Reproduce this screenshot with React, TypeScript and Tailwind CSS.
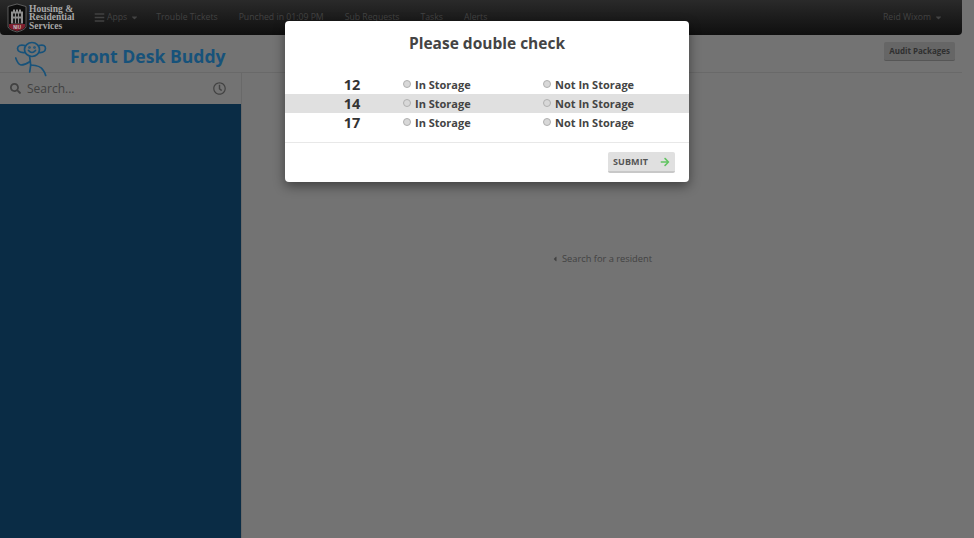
import { FaArrowRight, FaBars, FaCaretDown, FaCaretLeft, FaRegClock, FaSearch } from "react-icons/fa";

const rows = ["12", "14", "17"];
const navItems = ["Trouble Tickets", "Punched in 01:09 PM", "Sub Requests", "Tasks", "Alerts"];

function Logo() {
  return (
    <svg width="20" height="30" viewBox="0 0 20 29" className="shrink-0">
      <path d="M1 3 L10 0.5 L19 3 V23 Q19 26 10 28.5 Q1 26 1 23 Z" fill="#0c0c0c" stroke="#7a7a7a" strokeWidth="0.7" />
      <path d="M4 20 V8 H6 V6 H8 V8 H9 V6 H11 V8 H12 V6 H14 V8 H16 V20 Z" fill="#8f8f8f" />
      <path d="M6 10 H8 V13 H6 Z M9 10 H11 V13 H9 Z M12 10 H14 V13 H12 Z M6 15 H8 V20 H6 Z M9 15 H11 V20 H9 Z M12 15 H14 V20 H12 Z" fill="#1a1a1a" />
      <path d="M2 20.5 H18 V23 Q18 25.5 10 27.5 Q2 25.5 2 23 Z" fill="#7d1f2e" />
      <text x="10" y="25" textAnchor="middle" fontSize="4.5" fontWeight="700" fill="#c9c9c9" fontFamily="Liberation Sans, sans-serif">NIU</text>
    </svg>
  );
}

function Buddy() {
  return (
    <svg width="32" height="36" viewBox="0 0 32 36" fill="none" stroke="#17527a" strokeWidth="1.7" strokeLinecap="round" strokeLinejoin="round" className="shrink-0 mt-[6px]">
      <ellipse cx="17" cy="8.5" rx="7.5" ry="7" />
      <path d="M10 4.5 Q3 3 2.5 7.5 Q3 12 10 11.5" />
      <path d="M24 4.5 Q30.5 3 30.5 7.5 Q30 12 24 11.5" />
      <circle cx="14.5" cy="6.5" r="0.5" />
      <circle cx="19.5" cy="6.5" r="0.5" />
      <path d="M13.5 9.5 Q17 13.5 20.5 9.5" />
      <path d="M14.7 16 L15.7 24 Q25.7 24.5 28 29 Q30 31.5 30.7 34.5" />
      <path d="M15.7 24 L14.7 31" />
      <path d="M0.7 17 Q3 23.5 6 24 Q10 24 14.7 20.7" />
    </svg>
  );
}

function Radio({ label }: { label: string }) {
  return (
    <label className="flex items-center w-[140px]">
      <span className="w-[8px] h-[8px] rounded-full bg-[#d8d8d8] border border-[#b0b0b0] mr-[4px] mb-[1px] shrink-0" />
      <span className="mt-[1px] text-[11px] font-bold text-[#444]">{label}</span>
    </label>
  );
}

export default function App() {
  return (
    <div className="relative h-[538px] w-[974px] overflow-hidden bg-[#737373] font-['Open_Sans',sans-serif]">
      <nav className="flex items-center h-[35px] w-[962px] rounded-b-[4px] bg-gradient-to-b from-[#2a2a2a] to-[#0f0f0f] pl-[7px] pr-[19px] text-[8.7px] text-[#424242]">
        <Logo />
        <div className="ml-[2px] w-[65px] font-['Liberation_Serif',serif] font-bold text-[9.5px] leading-[8.5px] text-[#a8a8a8]">
          Housing &amp;<br />Residential<br />Services
        </div>
        <FaBars className="text-[11px]" />
        <span className="ml-[2px]">Apps</span>
        <FaCaretDown className="text-[9px] ml-[3px]" />
        <div className="flex ml-[17px] gap-[21px]">
          {navItems.map((item) => (
            <span key={item}>{item}</span>
          ))}
        </div>
        <span className="ml-auto">Reid Wixom</span>
        <FaCaretDown className="text-[9px] ml-[3px]" />
      </nav>

      <header className="flex items-start h-[38px] w-[962px] border-b border-[#696969] pl-[15px] pr-[7px]">
        <Buddy />
        <h1 className="ml-[23px] mt-[8px] text-[17.6px] leading-[26px] font-bold text-[#17527a]">Front Desk Buddy</h1>
        <button className="ml-auto mt-[7px] h-[19px] px-[5px] rounded-[2px] bg-[#666666] border-b border-[#565656] text-[8px] font-bold text-[#303030]">
          Audit Packages
        </button>
      </header>

      <div className="flex h-[465px]">
        <aside className="flex flex-col w-[242px] border-r border-[#696969]">
          <div className="flex items-center h-[31px] pl-[10px] pr-[15px] text-[#424242]">
            <FaSearch className="text-[11px]" />
            <span className="ml-[6px] text-[12px]">Search...</span>
            <FaRegClock className="ml-auto text-[13px]" />
          </div>
          <div className="flex-1 bg-[#0a2c45]" />
        </aside>
        <main className="flex-1 flex justify-center pt-[178px] pr-[13px]">
          <div className="flex items-center h-[16px] text-[9.3px] text-[#424242]">
            <FaCaretLeft className="text-[8px] mr-[3px]" />
            Search for a resident
          </div>
        </main>
      </div>

      <div className="absolute left-[285px] top-[21px] w-[404px] h-[161px] rounded-[4px] bg-white shadow-[0_4px_12px_rgba(0,0,0,0.45)] flex flex-col">
        <h2 className="mt-[11px] text-center text-[15.5px] leading-[22px] font-bold text-[#444]">Please double check</h2>
        <div className="mt-[9px] pt-[12px] flex flex-col pb-[10px] border-b border-[#e8e8e8]">
          {rows.map((row, i) => (
            <div key={row} className={`flex items-center h-[19px] ${i === 1 ? "bg-[#e0e0e0]" : ""}`}>
              <span className="ml-[47px] w-[40px] text-center text-[14.5px] font-bold text-[#333]">{row}</span>
              <div className="ml-[31px] flex">
                <Radio label="In Storage" />
                <Radio label="Not In Storage" />
              </div>
            </div>
          ))}
        </div>
        <div className="flex justify-end pt-[9px] pr-[14px]">
          <button className="flex items-center justify-between w-[67px] h-[21px] px-[5px] rounded-[2px] bg-[#e0e0e0] border-b-2 border-[#c8c8c8] text-[9px] font-bold tracking-[0.1px] text-[#555]">
            SUBMIT
            <FaArrowRight className="text-[10px] text-[#62c462]" />
          </button>
        </div>
      </div>
    </div>
  );
}
